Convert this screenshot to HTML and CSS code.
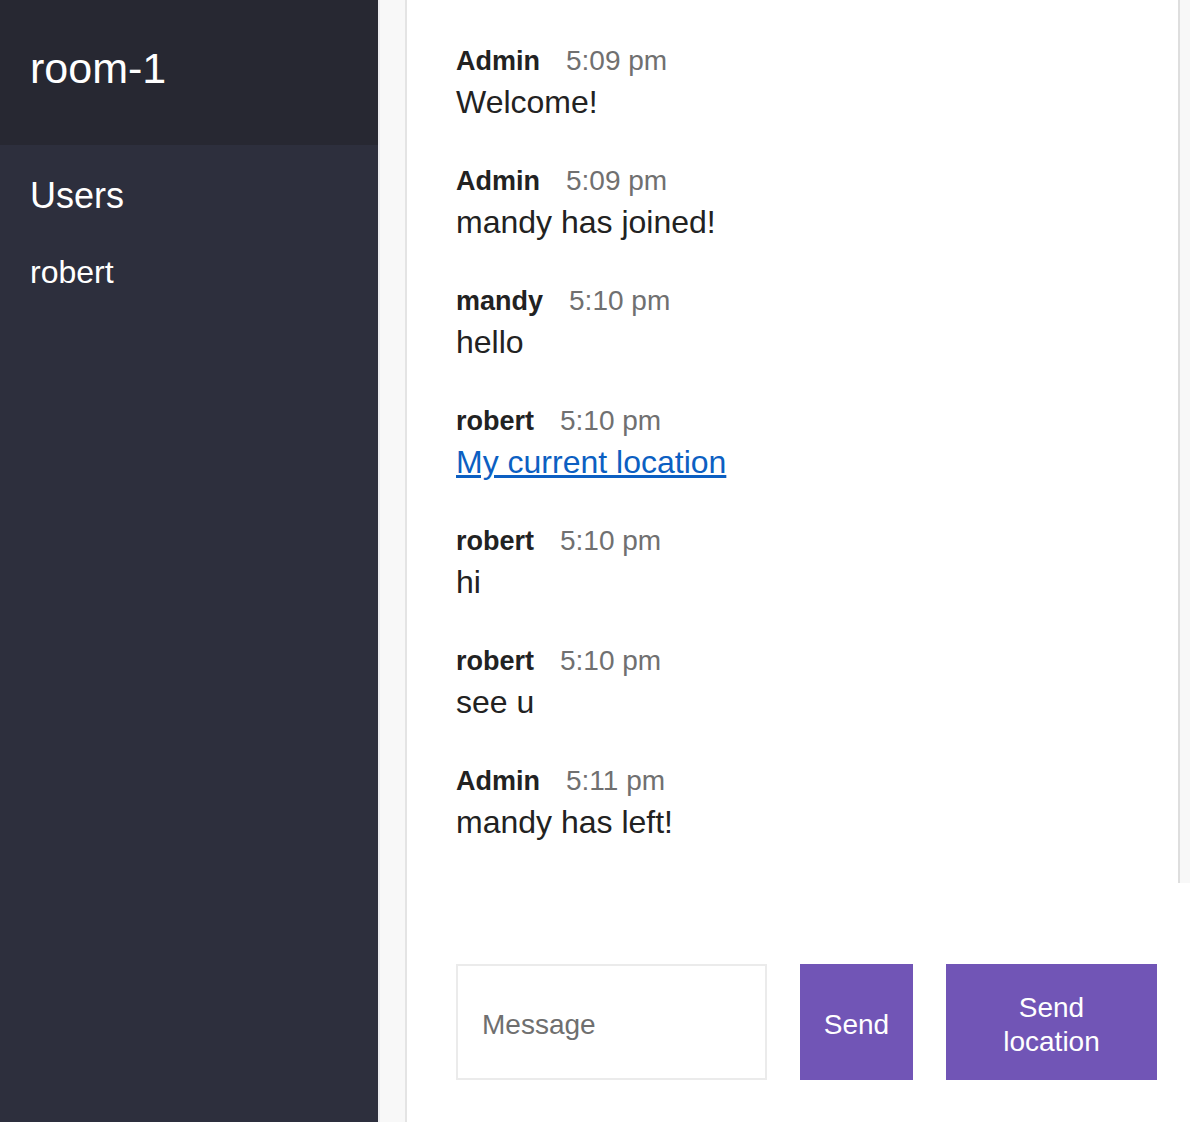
FILE: index.html
```html
<!DOCTYPE html>
<html lang="en">
<head>
<meta charset="utf-8">
<title>Chat | room-1</title>
<link rel="stylesheet" href="styles.css">
</head>
<body>
<div class="chat">
  <aside class="sidebar">
    <div class="sidebar__content">
      <div class="sidebar__header">
        <h2 class="room-title">room-1</h2>
      </div>
      <h3 class="users-title">Users</h3>
      <ul class="users">
        <li>robert</li>
      </ul>
    </div>
    <div class="scrollbar scrollbar--sidebar"></div>
  </aside>
  <main class="main">
    <div class="messages-wrap">
      <div class="messages">
        <div class="message">
          <div class="message__title"><span class="message__name">Admin</span><span class="message__time">5:09 pm</span></div>
          <p class="message__body">Welcome!</p>
        </div>
        <div class="message">
          <div class="message__title"><span class="message__name">Admin</span><span class="message__time">5:09 pm</span></div>
          <p class="message__body">mandy has joined!</p>
        </div>
        <div class="message">
          <div class="message__title"><span class="message__name">mandy</span><span class="message__time">5:10 pm</span></div>
          <p class="message__body">hello</p>
        </div>
        <div class="message">
          <div class="message__title"><span class="message__name">robert</span><span class="message__time">5:10 pm</span></div>
          <p class="message__body"><a class="message__link" href="#">My current location</a></p>
        </div>
        <div class="message">
          <div class="message__title"><span class="message__name">robert</span><span class="message__time">5:10 pm</span></div>
          <p class="message__body">hi</p>
        </div>
        <div class="message">
          <div class="message__title"><span class="message__name">robert</span><span class="message__time">5:10 pm</span></div>
          <p class="message__body">see u</p>
        </div>
        <div class="message">
          <div class="message__title"><span class="message__name">Admin</span><span class="message__time">5:11 pm</span></div>
          <p class="message__body">mandy has left!</p>
        </div>
      </div>
      <div class="scrollbar scrollbar--messages"></div>
    </div>
    <footer class="footer">
      <form class="compose">
        <input class="compose__input" type="text" placeholder="Message">
        <button class="btn btn--send" type="button">Send</button>
      </form>
      <button class="btn btn--location" type="button">Send<br>location</button>
    </footer>
  </main>
</div>
</body>
</html>
```

FILE: styles.css
```css
* {
  box-sizing: border-box;
}

html, body {
  margin: 0;
  padding: 0;
  height: 100%;
}

body {
  font-family: "Liberation Sans", Arial, Helvetica, sans-serif;
  color: #222;
  background: #fff;
}

.chat {
  display: flex;
  height: 1122px;
  overflow: hidden;
}

/* Sidebar */
.sidebar {
  display: flex;
  width: 407px;
  flex: none;
}

.sidebar__content {
  flex: 1;
  background: #2d2f3d;
  color: #fff;
}

.sidebar__header {
  height: 145px;
  background: #272832;
  padding: 47px 0 0 30px;
}

.room-title {
  margin: 0;
  font-size: 43px;
  line-height: 42px;
  font-weight: normal;
}

.users-title {
  margin: 33px 0 0 30px;
  font-size: 36px;
  line-height: 36px;
  font-weight: normal;
}

.users {
  list-style: none;
  margin: 40px 0 0 30px;
  padding: 0;
  font-size: 32px;
  line-height: 36px;
}

.scrollbar {
  flex: none;
  background: #f8f8f8;
}

.scrollbar--sidebar {
  width: 29px;
  border-left: 2px solid #ececef;
  border-right: 2px solid #e4e4e4;
}

.scrollbar--messages {
  width: 12px;
  border-left: 2px solid #dedede;
}

/* Main */
.main {
  flex: 1;
  display: flex;
  flex-direction: column;
  min-width: 0;
}

.messages-wrap {
  flex: 1;
  display: flex;
  min-height: 0;
}

.messages {
  flex: 1;
  padding: 45px 0 0 49px;
}

.message {
  margin-bottom: 43px;
}

.message__title {
  display: flex;
  align-items: baseline;
  gap: 26px;
  line-height: 32px;
}

.message__name {
  font-size: 27px;
  font-weight: bold;
  color: #222;
}

.message__time {
  font-size: 28px;
  color: #707070;
}

.message__body {
  margin: 5px 0 0;
  font-size: 32px;
  line-height: 40px;
  color: #222;
}

.message__link {
  color: #0c5fc2;
  text-decoration: underline;
}

/* Footer */
.footer {
  flex: none;
  height: 239px;
  display: flex;
  align-items: flex-start;
  gap: 33px;
  padding: 81px 0 42px 49px;
}

.compose {
  display: flex;
  gap: 33px;
  margin: 0;
}

.compose__input {
  width: 311px;
  height: 116px;
  border: 2px solid #ebebeb;
  padding: 5px 0 0 24px;
  font-family: inherit;
  font-size: 28px;
  color: #222;
  outline: none;
  background: #fff;
}

.compose__input::placeholder {
  color: #6f6f6f;
}

.btn {
  height: 116px;
  border: none;
  background: #7155b6;
  color: #fff;
  font-family: inherit;
  font-size: 28px;
  line-height: 34px;
  padding: 5px 0 0;
  cursor: pointer;
}

.btn--send {
  width: 113px;
}

.btn--location {
  width: 211px;
}
```
